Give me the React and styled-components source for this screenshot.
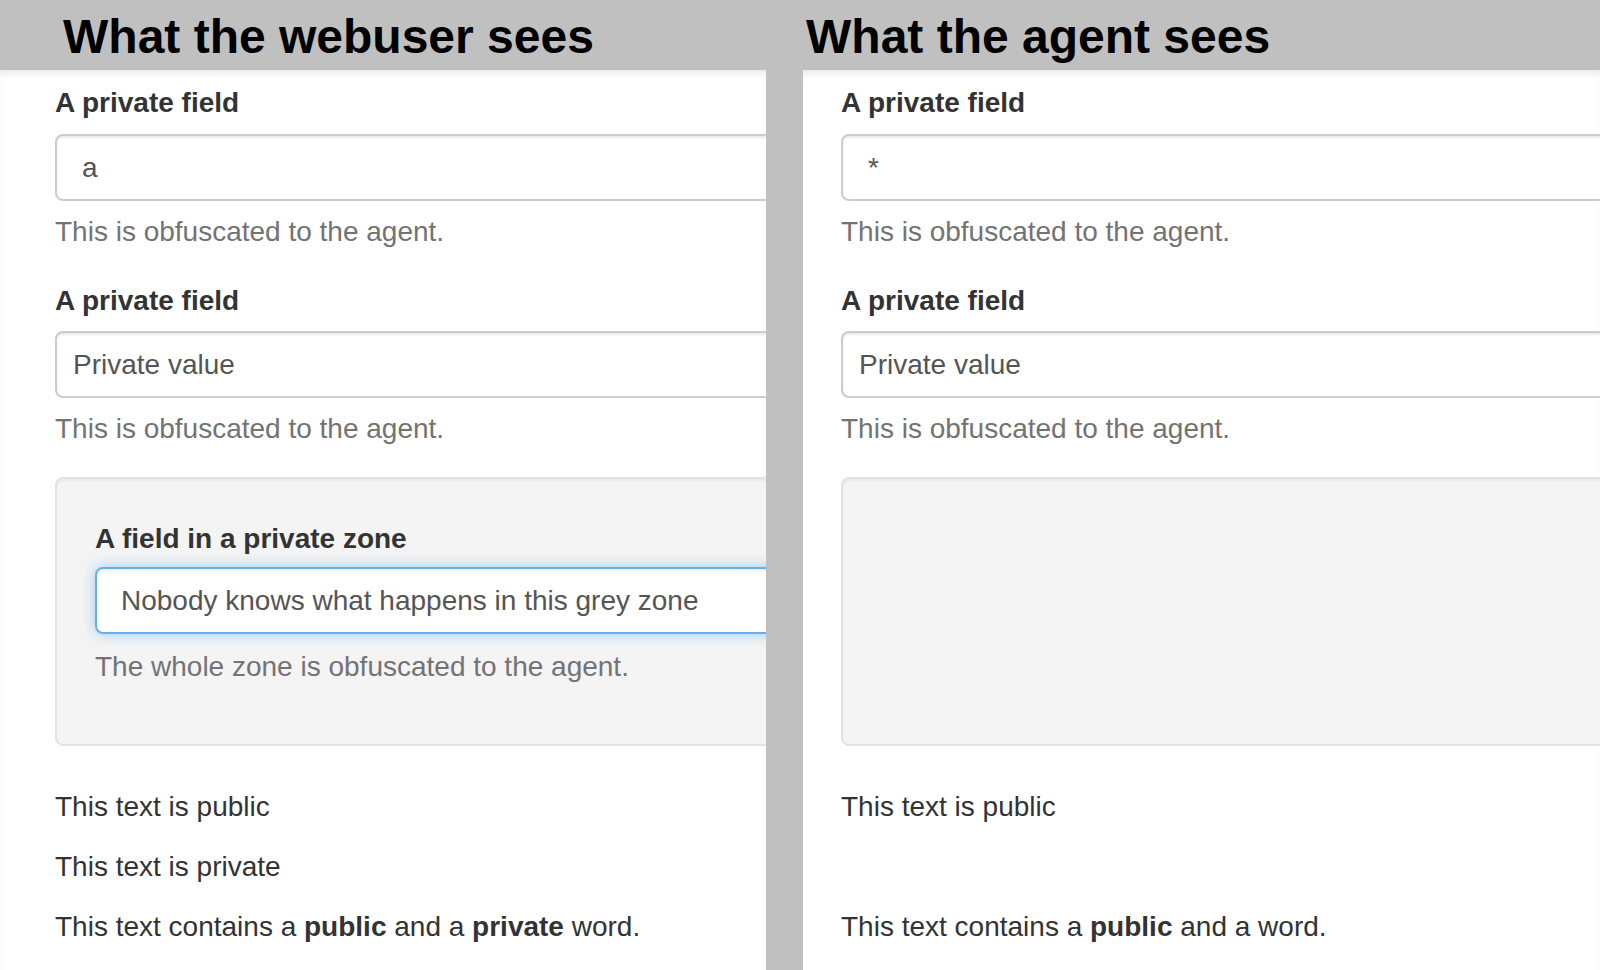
import React from "react";
import styled, { createGlobalStyle } from "styled-components";

const GlobalStyle = createGlobalStyle`
  html, body {
    margin: 0;
    padding: 0;
    height: 100%;
    overflow: hidden;
    background: #c0c0c0;
    font-family: "Liberation Sans", Arial, sans-serif;
  }
`;

const Page = styled.div`
  width: 1600px;
  height: 970px;
  display: flex;
  flex-direction: column;
  background: #c0c0c0;
`;

const Header = styled.header`
  height: 70px;
  display: grid;
  grid-template-columns: 766px 1fr;
  column-gap: 37px;
  flex-shrink: 0;
`;

const Title = styled.h1`
  margin: 0;
  padding: 3px 0 0 ${(p) => p.$indent}px;
  font-size: 48px;
  line-height: 67px;
  font-weight: 700;
  color: #000;
  white-space: nowrap;
`;

const Panels = styled.main`
  flex: 1;
  display: grid;
  grid-template-columns: 766px 1fr;
  column-gap: 37px;
  min-height: 0;
`;

const Panel = styled.section`
  background: #fff;
  overflow: hidden;
  padding-left: ${(p) => p.$indent}px;
  box-shadow: inset 0 7px 8px -5px rgba(0, 0, 0, 0.12);
  font-size: 28px;
  line-height: 40px;
  color: #333;
`;

const Group = styled.div`
  width: 1000px;
  margin-top: ${(p) => p.$top || 0}px;
`;

const Label = styled.label`
  display: block;
  font-weight: 700;
  color: #333;
  margin-bottom: ${(p) => p.$gap || 11}px;
`;

const Input = styled.input`
  display: block;
  box-sizing: border-box;
  width: 100%;
  height: 67px;
  padding: 0 ${(p) => p.$pad || 24}px;
  font-family: "Liberation Sans", Arial, sans-serif;
  font-size: 28px;
  color: #555;
  background: #fff;
  border: 2px solid ${(p) => (p.$focus ? "#66afe9" : "#cccccc")};
  border-radius: 8px;
  outline: none;
  box-shadow: ${(p) =>
    p.$focus
      ? "inset 0 2px 2px rgba(0,0,0,.075), 0 0 14px rgba(102,175,233,.6)"
      : "inset 0 2px 2px rgba(0,0,0,.075)"};
`;

const Help = styled.p`
  margin: ${(p) => p.$top || 11}px 0 0;
  color: #737373;
`;

const Well = styled.div`
  box-sizing: border-box;
  width: 1000px;
  height: 269px;
  margin-top: 28px;
  padding: 40px 38px 0;
  background: #f4f4f4;
  border: 2px solid #e3e3e3;
  border-radius: 8px;
  box-shadow: inset 0 2px 2px rgba(0, 0, 0, 0.05);
`;

const Para = styled.p`
  margin: ${(p) => p.$top || 20}px 0 0;
  min-height: 40px;
  color: #333;

  b {
    font-weight: 700;
  }
`;

function Fields({ first, zone }) {
  return (
    <>
      <Group $top={13}>
        <Label>A private field</Label>
        <Input readOnly value={first} $pad={25} />
        <Help>This is obfuscated to the agent.</Help>
      </Group>
      <Group $top={29}>
        <Label $gap={10}>A private field</Label>
        <Input readOnly value="Private value" $pad={16} />
        <Help>This is obfuscated to the agent.</Help>
      </Group>
      <Well>{zone}</Well>
    </>
  );
}

const App = () => {
  return (
    <Page>
      <GlobalStyle />
      <Header>
        <Title $indent={63}>What the webuser sees</Title>
        <Title $indent={3}>What the agent sees</Title>
      </Header>
      <Panels>
        <Panel $indent={55}>
          <Fields
            first="a"
            zone={
              <>
                <Label $gap={8}>A field in a private zone</Label>
                <Input
                  readOnly
                  value="Nobody knows what happens in this grey zone"
                  $focus
                  $pad={24}
                />
                <Help $top={13}>The whole zone is obfuscated to the agent.</Help>
              </>
            }
          />
          <Para $top={41}>This text is public</Para>
          <Para>This text is private</Para>
          <Para>
            This text contains a <b>public</b> and a <b>private</b> word.
          </Para>
        </Panel>
        <Panel $indent={38}>
          <Fields first="*" zone={null} />
          <Para $top={41}>This text is public</Para>
          <Para />
          <Para>
            This text contains a <b>public</b> and a word.
          </Para>
        </Panel>
      </Panels>
    </Page>
  );
};

export default App;
